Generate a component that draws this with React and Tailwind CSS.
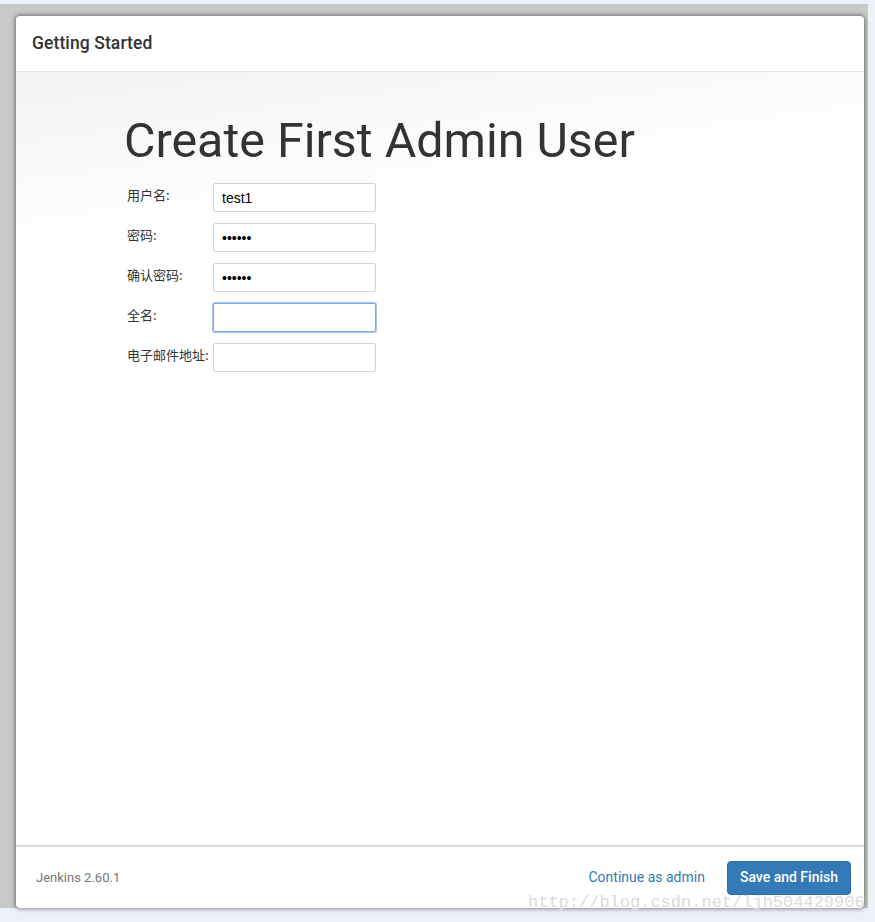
import React from "react";

const rows = [
  { label: "用户名:", value: "test1", type: "text" },
  { label: "密码:", value: "123456", type: "password" },
  { label: "确认密码:", value: "123456", type: "password" },
  { label: "全名:", value: "", type: "text", focus: true },
  { label: "电子邮件地址:", value: "", type: "text" },
];

export default function App() {
  return (
    <div
      className="w-[875px] h-[922px] bg-[#edf1f9] pt-[4px] relative overflow-hidden"
      style={{ fontFamily: "Roboto, 'Noto Sans CJK SC', sans-serif" }}
    >
      <div className="w-[868px] h-[904px] bg-[#c9c9c9] pt-[12px] pl-[16px]">
        <div className="w-[848px] h-[892px] bg-white rounded-[4px] shadow-[0_0_4px_1px_rgba(0,0,0,0.45)] flex flex-col overflow-hidden">
          <div className="h-[56px] shrink-0 flex items-center pl-[16px] border-b border-[#e5e5e5]">
            <h1 className="text-[17.5px] text-[#333] font-medium tracking-[0.1px]">Getting Started</h1>
          </div>
          <div className="flex-1 bg-[linear-gradient(172deg,#f3f3f3_0%,#fafafa_12%,#ffffff_22%)] pl-[108px] pt-[41px]">
            <h2 className="text-[48.4px] leading-[56px] text-[#333] font-normal">Create First Admin User</h2>
            <div className="mt-[14px] flex flex-col gap-[11px]">
              {rows.map((r) => (
                <div key={r.label} className="flex items-start">
                  <div
                    className="w-[89px] pl-[3px] pt-[3px] text-[13px] leading-[18px] text-[#333]"
                    style={{ fontFamily: "'Noto Sans CJK SC', sans-serif" }}
                  >
                    {r.label}
                  </div>
                  <input
                    readOnly
                    type={r.type}
                    value={r.value}
                    className={
                      r.focus
                        ? "w-[163px] h-[29px] rounded-[2px] border border-[#7fa7e6] shadow-[0_0_0_1px_#a9c5f2] px-[8px] text-[14px] text-black bg-white outline-none"
                        : "w-[163px] h-[29px] rounded-[2px] border border-[#d4d4d4] px-[8px] text-[14px] text-black bg-white outline-none"
                    }
                    style={{ fontFamily: "Arial, 'Liberation Sans', sans-serif" }}
                  />
                </div>
              ))}
            </div>
          </div>
          <div className="h-[63px] shrink-0 border-t-2 border-[#d9d9d9] flex items-center justify-between pl-[20px] pr-[13px]">
            <span className="text-[13px] text-[#777]">Jenkins 2.60.1</span>
            <div className="flex items-center gap-[22px]">
              <span className="text-[14px] text-[#337ab7]">Continue as admin</span>
              <button className="h-[34px] px-[12px] rounded-[4px] bg-[#337ab7] border border-[#2e6da4] text-white text-[14px] font-medium">
                Save and Finish
              </button>
            </div>
          </div>
        </div>
      </div>
      <div
        className="absolute left-[528px] top-[893px] text-[17px] leading-[20px] text-[#dadada] whitespace-nowrap pointer-events-none"
        style={{ fontFamily: "'Liberation Mono', monospace", textShadow: "0 0 1px #fff" }}
      >
        http://blog.csdn.net/ljh504429906
      </div>
    </div>
  );
}
